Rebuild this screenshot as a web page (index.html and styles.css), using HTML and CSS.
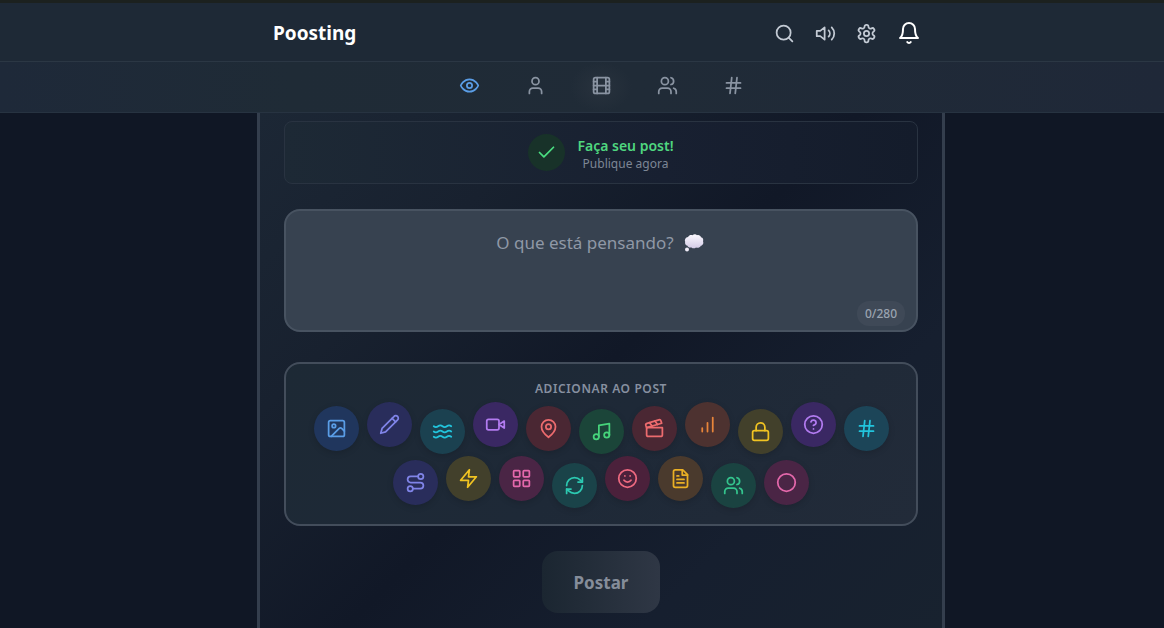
FILE: index.html
```html
<!DOCTYPE html>
<html lang="pt-BR">
<head>
    <meta charset="UTF-8">
    <meta name="viewport" content="width=device-width, initial-scale=1.0">
    <title>Poosting</title>
    <link rel="stylesheet" href="styles.css">
</head>
<body>

<header class="topbar">
    <div class="topbar-inner">
        <h1 class="brand">Poosting</h1>
        <div class="actions">
            <button type="button" class="action" aria-label="Buscar">
                <svg class="icon" viewBox="0 0 24 24"><circle cx="11" cy="11" r="8"/><path d="m21 21-4.3-4.3"/></svg>
            </button>
            <button type="button" class="action" aria-label="Som">
                <svg class="icon" viewBox="0 0 24 24"><path d="M11 5 6 9H2v6h4l5 4V5z"/><path d="M15.54 8.46a5 5 0 0 1 0 7.07"/><path d="M19.07 4.93a10 10 0 0 1 0 14.14"/></svg>
            </button>
            <button type="button" class="action" aria-label="Configurações">
                <svg class="icon" viewBox="0 0 24 24"><path d="M12.22 2h-.44a2 2 0 0 0-2 2v.18a2 2 0 0 1-1 1.73l-.43.25a2 2 0 0 1-2 0l-.15-.08a2 2 0 0 0-2.73.73l-.22.38a2 2 0 0 0 .73 2.73l.15.1a2 2 0 0 1 1 1.72v.51a2 2 0 0 1-1 1.74l-.15.09a2 2 0 0 0-.73 2.73l.22.38a2 2 0 0 0 2.73.73l.15-.08a2 2 0 0 1 2 0l.43.25a2 2 0 0 1 1 1.73V20a2 2 0 0 0 2 2h.44a2 2 0 0 0 2-2v-.18a2 2 0 0 1 1-1.73l.43-.25a2 2 0 0 1 2 0l.15.08a2 2 0 0 0 2.73-.73l.22-.39a2 2 0 0 0-.73-2.73l-.15-.08a2 2 0 0 1-1-1.74v-.5a2 2 0 0 1 1-1.74l.15-.09a2 2 0 0 0 .73-2.73l-.22-.38a2 2 0 0 0-2.73-.73l-.15.08a2 2 0 0 1-2 0l-.43-.25a2 2 0 0 1-1-1.73V4a2 2 0 0 0-2-2z"/><circle cx="12" cy="12" r="3"/></svg>
            </button>
            <button type="button" class="action bell" aria-label="Notificações">
                <svg class="icon" viewBox="0 0 24 24"><path d="M18 8A6 6 0 0 0 6 8c0 7-3 9-3 9h18s-3-2-3-9"/><path d="M13.73 21a2 2 0 0 1-3.46 0"/></svg>
            </button>
        </div>
    </div>
</header>

<nav class="tabs">
    <button type="button" class="tab active" aria-label="Ver">
        <svg class="icon" viewBox="0 0 24 24"><path d="M2 12s3-7 10-7 10 7 10 7-3 7-10 7-10-7-10-7Z"/><circle cx="12" cy="12" r="3"/></svg>
    </button>
    <button type="button" class="tab" aria-label="Perfil">
        <svg class="icon" viewBox="0 0 24 24"><path d="M19 21v-2a4 4 0 0 0-4-4H9a4 4 0 0 0-4 4v2"/><circle cx="12" cy="7" r="4"/></svg>
    </button>
    <button type="button" class="tab glow" aria-label="Vídeos">
        <svg class="icon" viewBox="0 0 24 24"><rect x="3" y="3" width="18" height="18" rx="2"/><path d="M7 3v18M17 3v18M3 7.5h4M3 12h18M3 16.5h4M17 7.5h4M17 16.5h4"/></svg>
    </button>
    <button type="button" class="tab" aria-label="Grupos">
        <svg class="icon" viewBox="0 0 24 24"><path d="M16 21v-2a4 4 0 0 0-4-4H6a4 4 0 0 0-4 4v2"/><circle cx="9" cy="7" r="4"/><path d="M22 21v-2a4 4 0 0 0-3-3.87"/><path d="M16 3.13a4 4 0 0 1 0 7.75"/></svg>
    </button>
    <button type="button" class="tab" aria-label="Hashtags">
        <svg class="icon" viewBox="0 0 24 24"><path d="M4 9h16M4 15h16M10 3 8 21M16 3l-2 18"/></svg>
    </button>
</nav>

<div class="page">
<main class="feed">
    <section class="notice">
        <span class="notice-badge">
            <svg class="icon" viewBox="0 0 24 24"><path d="M20 6 9 17l-5-5"/></svg>
        </span>
        <div class="notice-text">
            <strong>Faça seu post!</strong>
            <span>Publique agora</span>
        </div>
    </section>

    <form class="composer">
        <div class="editor">
            <textarea class="editor-input" id="post" maxlength="280" aria-label="Seu post" placeholder="O que está pensando?"></textarea>
            <svg class="thought" viewBox="0 0 20 18">
                <defs>
                    <linearGradient id="cloud" x1="0" y1="0" x2="0" y2="1">
                        <stop offset="0" stop-color="#fbf9ff"/>
                        <stop offset="1" stop-color="#d3cbe6"/>
                    </linearGradient>
                </defs>
                <path fill="url(#cloud)" d="M4 3C5 1 7 .6 8.5 1.2 10 0 12 .2 13 1.2 15 .6 16.5 1.7 17 3.2 19 3.7 19.7 5.5 19 7.2 20 9.5 18.5 11.5 16.8 11.8 16 13.7 13.5 14.2 12 13.5 10.5 14.9 8.5 14.4 7.5 13.4 5.5 14 4 13.2 3.5 11.8 1.5 11.4.6 9.5 1.2 7.8.2 5.8 1.8 3.3 4 3Z"/>
                <circle fill="#f1edf9" cx="3" cy="15.5" r="2"/>
            </svg>
            <label class="counter" for="post">0/280</label>
        </div>

        <section class="tools">
            <h2 class="tools-title">ADICIONAR AO POST</h2>
            <ul class="tool-list">
                <li class="mid"><button type="button" class="tool blue" aria-label="Imagem">
                    <svg class="icon" viewBox="0 0 24 24"><rect x="3" y="3" width="18" height="18" rx="2"/><circle cx="9" cy="9" r="2"/><path d="m21 15-3.1-3.1a2 2 0 0 0-2.8 0L6 21"/></svg>
                </button></li>
                <li class="high"><button type="button" class="tool indigo" aria-label="Desenho">
                    <svg class="icon" viewBox="0 0 24 24"><path d="M17 3a2.85 2.83 0 1 1 4 4L7.5 20.5 2 22l1.5-5.5Z"/><path d="m15 5 4 4"/></svg>
                </button></li>
                <li class="low"><button type="button" class="tool cyan" aria-label="Ondas">
                    <svg class="icon" viewBox="0 0 24 24"><path d="M2 6c.6.5 1.2 1 2.5 1C7 7 7 5 9.5 5c2.6 0 2.4 2 5 2 2.5 0 2.5-2 5-2 1.3 0 1.9.5 2.5 1"/><path d="M2 12c.6.5 1.2 1 2.5 1 2.5 0 2.5-2 5-2 2.6 0 2.4 2 5 2 2.5 0 2.5-2 5-2 1.3 0 1.9.5 2.5 1"/><path d="M2 18c.6.5 1.2 1 2.5 1 2.5 0 2.5-2 5-2 2.6 0 2.4 2 5 2 2.5 0 2.5-2 5-2 1.3 0 1.9.5 2.5 1"/></svg>
                </button></li>
                <li class="high"><button type="button" class="tool purple" aria-label="Vídeo">
                    <svg class="icon" viewBox="0 0 24 24"><path d="m22 8-6 4 6 4V8Z"/><rect x="2" y="6" width="14" height="12" rx="2"/></svg>
                </button></li>
                <li class="mid"><button type="button" class="tool red" aria-label="Local">
                    <svg class="icon" viewBox="0 0 24 24"><path d="M20 10c0 6-8 12-8 12s-8-6-8-12a8 8 0 0 1 16 0Z"/><circle cx="12" cy="10" r="3"/></svg>
                </button></li>
                <li class="low"><button type="button" class="tool green" aria-label="Música">
                    <svg class="icon" viewBox="0 0 24 24"><path d="M9 18V5l12-2v13"/><circle cx="6" cy="18" r="3"/><circle cx="18" cy="16" r="3"/></svg>
                </button></li>
                <li class="mid"><button type="button" class="tool red" aria-label="Filme">
                    <svg class="icon" viewBox="0 0 24 24"><path d="M20.2 6 3 11l-.9-2.4c-.3-1.1.3-2.2 1.3-2.5l13.5-4c1.1-.3 2.2.3 2.5 1.3Z"/><path d="m6.2 5.3 3.1 3.9M12.4 3.4l3.1 4"/><path d="M3 11h18v8a2 2 0 0 1-2 2H5a2 2 0 0 1-2-2Z"/></svg>
                </button></li>
                <li class="high"><button type="button" class="tool orange" aria-label="Enquete">
                    <svg class="icon" viewBox="0 0 24 24"><path d="M12 20V10M18 20V4M6 20v-4"/></svg>
                </button></li>
                <li class="low"><button type="button" class="tool yellow" aria-label="Privado">
                    <svg class="icon" viewBox="0 0 24 24"><rect x="3" y="11" width="18" height="11" rx="2"/><path d="M7 11V7a5 5 0 0 1 10 0v4"/></svg>
                </button></li>
                <li class="high"><button type="button" class="tool purple" aria-label="Pergunta">
                    <svg class="icon" viewBox="0 0 24 24"><circle cx="12" cy="12" r="10"/><path d="M9.09 9a3 3 0 0 1 5.83 1c0 2-3 3-3 3M12 17h.01"/></svg>
                </button></li>
                <li class="mid"><button type="button" class="tool sky" aria-label="Hashtag">
                    <svg class="icon" viewBox="0 0 24 24"><path d="M4 9h16M4 15h16M10 3 8 21M16 3l-2 18"/></svg>
                </button></li>
                <li class="mid"><button type="button" class="tool indigo" aria-label="Rota">
                    <svg class="icon" viewBox="0 0 24 24"><circle cx="6" cy="19" r="3"/><path d="M9 19h8.5a3.5 3.5 0 0 0 0-7h-11a3.5 3.5 0 0 1 0-7H15"/><circle cx="18" cy="5" r="3"/></svg>
                </button></li>
                <li class="high"><button type="button" class="tool yellow" aria-label="Rápido">
                    <svg class="icon" viewBox="0 0 24 24"><path d="M13 2 3 14h9l-1 8 10-12h-9l1-8z"/></svg>
                </button></li>
                <li class="high"><button type="button" class="tool pink" aria-label="Galeria">
                    <svg class="icon" viewBox="0 0 24 24"><rect x="3" y="3" width="7" height="7" rx="1"/><rect x="14" y="3" width="7" height="7" rx="1"/><rect x="14" y="14" width="7" height="7" rx="1"/><rect x="3" y="14" width="7" height="7" rx="1"/></svg>
                </button></li>
                <li class="low"><button type="button" class="tool teal" aria-label="Atualizar">
                    <svg class="icon" viewBox="0 0 24 24"><path d="M3 12a9 9 0 0 1 9-9 9.75 9.75 0 0 1 6.74 2.74L21 8"/><path d="M21 3v5h-5"/><path d="M21 12a9 9 0 0 1-9 9 9.75 9.75 0 0 1-6.74-2.74L3 16"/><path d="M8 16H3v5"/></svg>
                </button></li>
                <li class="high"><button type="button" class="tool rose" aria-label="Emoji">
                    <svg class="icon" viewBox="0 0 24 24"><circle cx="12" cy="12" r="10"/><path d="M8 14s1.5 2 4 2 4-2 4-2M9 9h.01M15 9h.01"/></svg>
                </button></li>
                <li class="high"><button type="button" class="tool amber" aria-label="Texto">
                    <svg class="icon" viewBox="0 0 24 24"><path d="M14.5 2H6a2 2 0 0 0-2 2v16a2 2 0 0 0 2 2h12a2 2 0 0 0 2-2V7.5L14.5 2z"/><path d="M14 2v6h6M16 13H8M16 17H8M10 9H8"/></svg>
                </button></li>
                <li class="low"><button type="button" class="tool emerald" aria-label="Amigos">
                    <svg class="icon" viewBox="0 0 24 24"><path d="M16 21v-2a4 4 0 0 0-4-4H6a4 4 0 0 0-4 4v2"/><circle cx="9" cy="7" r="4"/><path d="M22 21v-2a4 4 0 0 0-3-3.87"/><path d="M16 3.13a4 4 0 0 1 0 7.75"/></svg>
                </button></li>
                <li class="mid"><button type="button" class="tool pink" aria-label="Círculo">
                    <svg class="icon" viewBox="0 0 24 24"><circle cx="12" cy="12" r="10"/></svg>
                </button></li>
            </ul>
        </section>

        <button type="submit" class="submit" disabled>Postar</button>
    </form>
</main>
</div>

</body>
</html>
```

FILE: styles.css
```css
* {
    box-sizing: border-box;
}
body {
    margin: 0;
    min-height: 100vh;
    display: flex;
    flex-direction: column;
    font-family: "Noto Sans", sans-serif;
    color: #ffffff;
    background-color: #101725;
}
button {
    display: flex;
    align-items: center;
    justify-content: center;
    padding: 0;
    border: none;
    background: none;
    font-family: inherit;
    cursor: pointer;
}
.icon {
    width: 21px;
    height: 21px;
    fill: none;
    stroke: currentColor;
    stroke-width: 2;
    stroke-linecap: round;
    stroke-linejoin: round;
}

/* header */
.topbar {
    padding-left: 38px;
    border-top: 3px solid #1c211f;
    border-bottom: 1px solid #2b3744;
    background-color: #1e2936;
}
.topbar-inner {
    display: flex;
    align-items: center;
    justify-content: space-between;
    height: 58px;
    max-width: 688px;
    margin: 0 auto;
    padding: 2px 16px 0;
}
.brand {
    margin: 0;
    font-size: 19px;
    line-height: 28px;
}
.actions {
    display: flex;
    align-items: center;
    gap: 4px;
}
.action {
    padding: 8px;
    color: #c3cad4;
}
.bell {
    color: #ffffff;
}
.bell .icon {
    width: 24px;
    height: 24px;
}

/* tabs */
.tabs {
    display: flex;
    justify-content: center;
    gap: 4px;
    padding-left: 38px;
    border-bottom: 1px solid #273341;
    background: linear-gradient(90deg, #1e2939, #1f2b36 25%, #202b37 55%, #1f2838);
}
.tab {
    width: 62px;
    height: 50px;
    padding-bottom: 4px;
    color: #8a94a2;
}
.tab.active {
    color: #5a9de6;
}
.tab.glow {
    background: radial-gradient(closest-side, #28323d, transparent);
}

/* feed */
.page {
    flex: 1;
    display: flex;
    justify-content: center;
    padding-left: 38px;
}
.feed {
    flex: 1;
    max-width: 688px;
    padding: 8px 24px 16px;
    border: solid #343e4d;
    border-width: 0 3px;
    background: linear-gradient(135deg, #1c2735, #18212f 25%, #111827 50%, #161f2f 75%, #18222f);
}
.notice {
    display: flex;
    align-items: center;
    justify-content: center;
    gap: 12px;
    height: 63px;
    border: 1px solid #293341;
    border-radius: 8px;
    background: linear-gradient(90deg, #1d2935, #182031 60%, #141c2b);
}
.notice-badge {
    display: flex;
    align-items: center;
    justify-content: center;
    width: 37px;
    height: 37px;
    border-radius: 50%;
    color: #4ade80;
    background-color: #183229;
}
.notice-text {
    padding-top: 2px;
    text-align: center;
    font-size: 12px;
    line-height: 17px;
    color: #7d8695;
}
.notice-text strong {
    display: block;
    font-size: 14px;
    font-weight: 600;
    line-height: 19px;
    color: #4fd67f;
}

/* composer */
.editor {
    position: relative;
    margin-top: 25px;
}
.editor-input {
    display: block;
    width: 100%;
    height: 123px;
    padding: 19px 54px 20px 22px;
    border: 2px solid #485361;
    border-radius: 16px;
    outline: none;
    resize: none;
    text-align: center;
    font-family: inherit;
    font-size: 17px;
    line-height: 26px;
    color: #ffffff;
    background-color: #374250;
}
.editor-input::placeholder {
    color: #8f98a6;
}
.thought {
    position: absolute;
    top: 25px;
    left: calc(50% + 83px);
    width: 20px;
    height: 18px;
    pointer-events: none;
}
.editor-input:not(:placeholder-shown) + .thought {
    display: none;
}
.counter {
    position: absolute;
    right: 13px;
    bottom: 6px;
    padding: 4px 8px;
    border-radius: 12px;
    font-size: 12px;
    font-weight: 500;
    line-height: 17px;
    color: #9aa3b0;
    background-color: #3f4957;
}

/* tools */
.tools {
    margin-top: 30px;
    padding: 16px 22px;
    border: 2px solid #434d5b;
    border-radius: 16px;
    background: linear-gradient(135deg, #1d2935, #1e2937 50%, #222b39);
}
.tools-title {
    margin: 0 0 5px;
    text-align: center;
    font-size: 12px;
    font-weight: 600;
    letter-spacing: 0.05em;
    line-height: 17px;
    color: #8790a0;
}
.tool-list {
    display: flex;
    flex-wrap: wrap;
    justify-content: center;
    gap: 2px 8px;
    margin: 0;
    padding: 0;
    list-style: none;
}
.tool-list li {
    display: flex;
    height: 52px;
}
.high {
    align-items: flex-start;
}
.mid {
    align-items: center;
}
.low {
    align-items: flex-end;
}
.tool {
    width: 45px;
    height: 45px;
    border-radius: 50%;
    box-shadow: 0 2px 6px rgba(0, 0, 0, 0.15);
}
.blue {
    color: #5a9de6;
    background-color: #20365d;
}
.indigo {
    color: #8084e8;
    background-color: #292d5b;
}
.cyan {
    color: #22c4dc;
    background-color: #1b4150;
}
.sky {
    color: #22c4dc;
    background-color: #1c4558;
}
.purple {
    color: #b27bf0;
    background-color: #3a2863;
}
.red {
    color: #ec6b6e;
    background-color: #4a2733;
}
.green {
    color: #46d47b;
    background-color: #1b4539;
}
.orange {
    color: #e8853a;
    background-color: #4d3230;
}
.yellow {
    color: #f0c322;
    background-color: #42402b;
}
.pink {
    color: #e468ab;
    background-color: #4a2545;
}
.teal {
    color: #2cc9b1;
    background-color: #1a4349;
}
.rose {
    color: #ee6a80;
    background-color: #4b213b;
}
.amber {
    color: #eab024;
    background-color: #4a3a2d;
}
.emerald {
    color: #34c48d;
    background-color: #1a4341;
}

.submit {
    height: 62px;
    margin: 25px auto 0;
    padding: 1px 32px 0;
    border-radius: 16px;
    font-size: 17px;
    font-weight: 700;
    color: #858d9a;
    background: linear-gradient(90deg, #1b2631, #2f3745);
}
```
